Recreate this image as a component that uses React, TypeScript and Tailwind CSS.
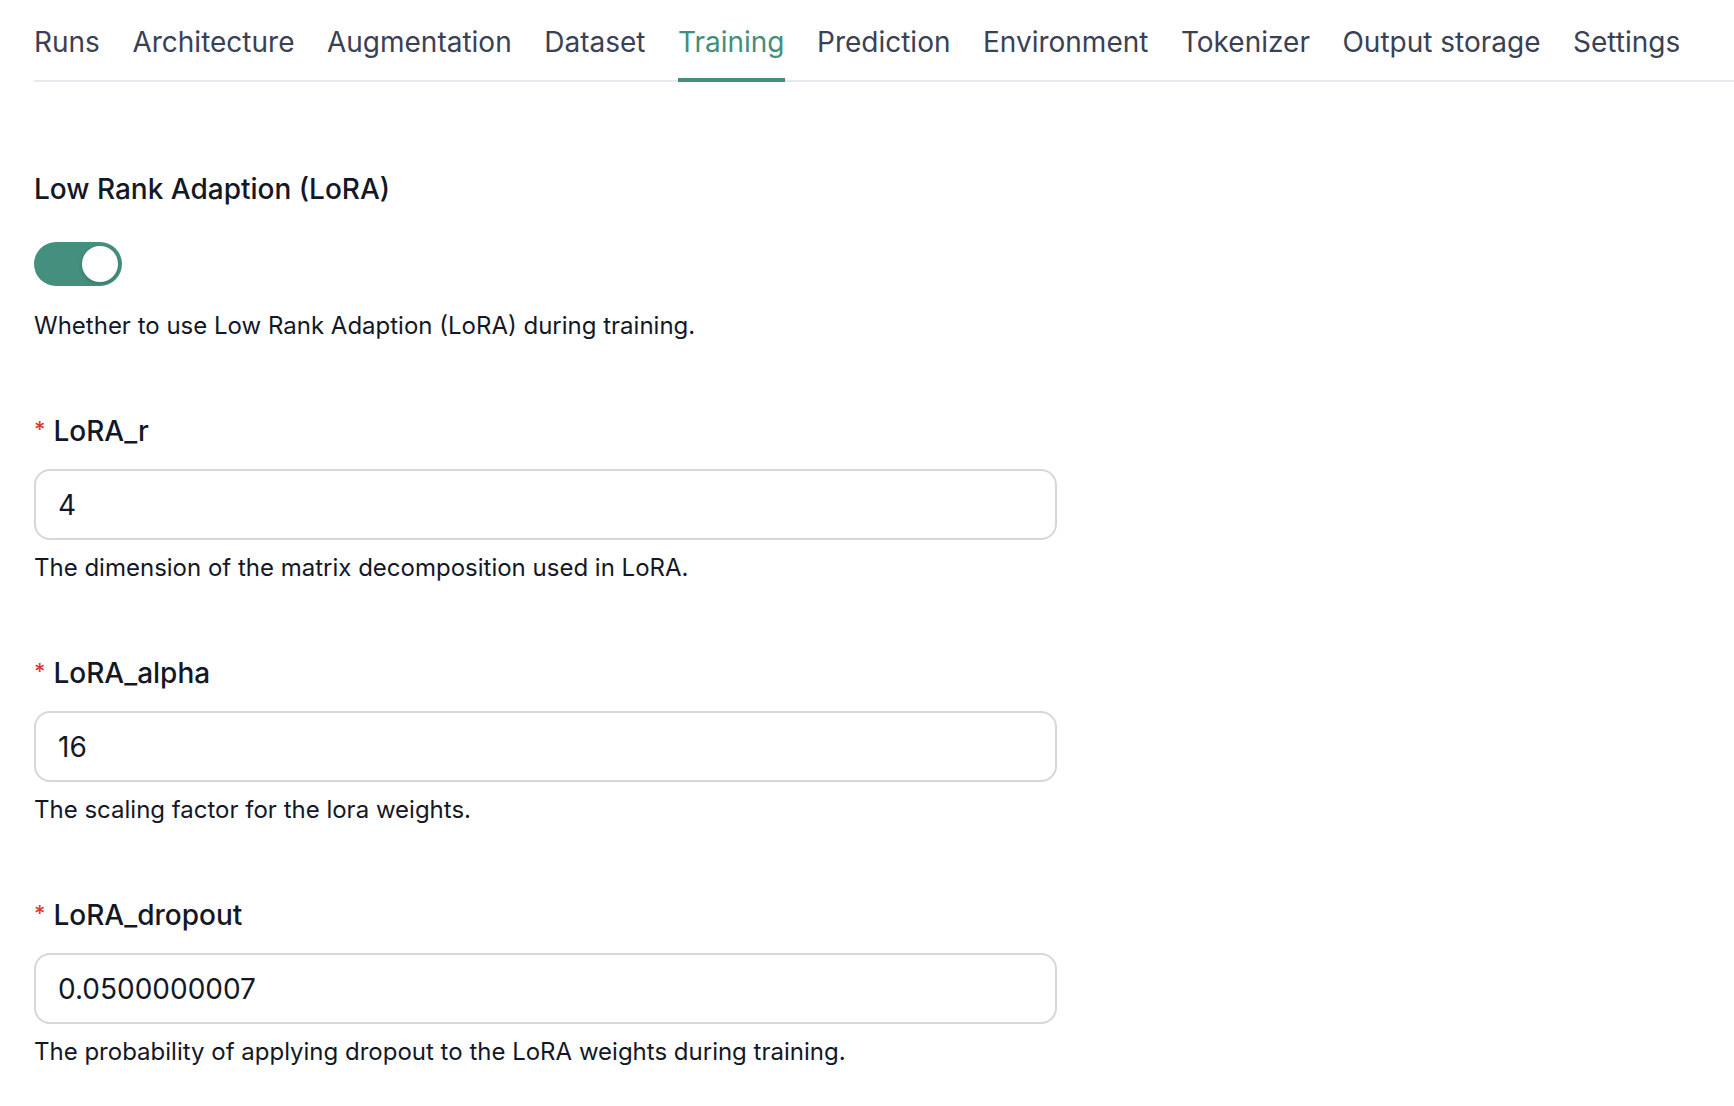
import React, { useState } from 'react';

const tabs = [
  'Runs',
  'Architecture',
  'Augmentation',
  'Dataset',
  'Training',
  'Prediction',
  'Environment',
  'Tokenizer',
  'Output storage',
  'Settings',
];

const fields = [
  { label: 'LoRA_r', value: '4', help: 'The dimension of the matrix decomposition used in LoRA.' },
  { label: 'LoRA_alpha', value: '16', help: 'The scaling factor for the lora weights.' },
  { label: 'LoRA_dropout', value: '0.0500000007', help: 'The probability of applying dropout to the LoRA weights during training.' },
];

const NumberField = ({ label, value, help }: { label: string; value: string; help: string }) => (
  <div className="flex flex-col mt-[71px]">
    <label className="flex items-start text-[28px] leading-[36px] font-medium text-[#141826]">
      <span className="text-[#d93a2b] text-[22px] leading-[22px] mt-[5px] mr-[8px]">*</span>
      {label}
    </label>
    <input
      defaultValue={value}
      className="mt-[20px] w-[1023px] h-[71px] rounded-[16px] border-2 border-[#d4d7de] px-[22px] text-[28px] text-[#141826] outline-none"
    />
    <p className="mt-[12px] text-[24px] leading-[32px] text-[#141826]">{help}</p>
  </div>
);

export default function App() {
  const [enabled, setEnabled] = useState(true);

  return (
    <div className="min-h-screen bg-white pl-[34px] font-['Inter',sans-serif]">
      {/* Tab bar */}
      <nav className="flex gap-[32.5px] border-b-2 border-[#e8e9ee]">
        {tabs.map((t) => (
          <button
            key={t}
            className={`relative pt-[24px] pb-[20px] text-[28px] leading-[36px] ${
              t === 'Training' ? 'text-[#438e7d]' : 'text-[#3a4154]'
            }`}
          >
            {t}
            {t === 'Training' && (
              <span className="absolute left-0 right-0 bottom-[-2px] h-[4px] bg-[#438e7d]" />
            )}
          </button>
        ))}
      </nav>

      <div className="flex flex-col">
        <h3 className="mt-[89px] text-[28px] leading-[36px] font-medium text-[#141826]">
          Low Rank Adaption (LoRA)
        </h3>

        <button
          onClick={() => setEnabled(!enabled)}
          className={`mt-[35px] w-[88px] h-[44px] rounded-full flex items-center px-[4px] ${
            enabled ? 'bg-[#458f7e] justify-end' : 'bg-[#d4d7de] justify-start'
          }`}
        >
          <span className="block w-[36px] h-[36px] rounded-full bg-white shadow-[0_2px_4px_rgba(0,0,0,0.15)]" />
        </button>

        <p className="mt-[24px] text-[24px] leading-[32px] text-[#141826]">
          Whether to use Low Rank Adaption (LoRA) during training.
        </p>

        {fields.map((f) => (
          <NumberField key={f.label} {...f} />
        ))}
      </div>
    </div>
  );
}
